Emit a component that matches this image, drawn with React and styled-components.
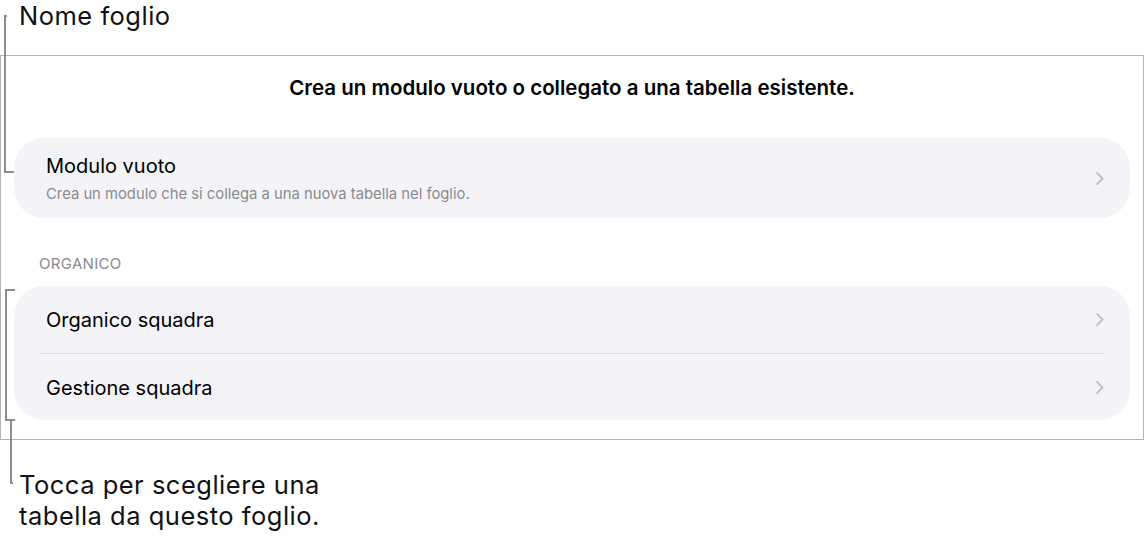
import React from 'react';
import styled, { createGlobalStyle } from 'styled-components';

const GlobalStyle = createGlobalStyle`
    body {
        margin: 0;
        background: #ffffff;
        font-family: Inter, "Liberation Sans", sans-serif;
        color: #000000;
    }
`

const Chevron = () => (
    <ChevronIcon width="8" height="13" viewBox="0 0 8 13">
        <polyline points="1.2,1 6.5,6.5 1.2,12" fill="none" stroke="#c3c3c7" strokeWidth="2" strokeLinecap="round" strokeLinejoin="round" />
    </ChevronIcon>
)

const Leaders = () => (
    <LeaderSvg width="1144" height="537" viewBox="0 0 1144 537">
        <g fill="none" stroke="#8e8e8e" strokeWidth="2">
            <path d="M7 16 H5 V172 H14" />
            <path d="M15 290 H6 V420 H15" />
            <path d="M11 420 V483 H13" />
        </g>
    </LeaderSvg>
)

const App = () => {
    return (
        <Page>
            <GlobalStyle />
            <Callout>Nome foglio</Callout>
            <Frame>
                <Title>Crea un modulo vuoto o collegato a una tabella esistente.</Title>
                <Group>
                    <Row tall>
                        <RowText>
                            <RowLabel>Modulo vuoto</RowLabel>
                            <RowDetail>Crea un modulo che si collega a una nuova tabella nel foglio.</RowDetail>
                        </RowText>
                        <Chevron />
                    </Row>
                </Group>
                <SectionLabel>ORGANICO</SectionLabel>
                <Group>
                    <Row>
                        <RowLabel>Organico squadra</RowLabel>
                        <Chevron />
                    </Row>
                    <Row divider>
                        <RowLabel>Gestione squadra</RowLabel>
                        <Chevron />
                    </Row>
                </Group>
            </Frame>
            <Callout bottom>Tocca per scegliere una<br />tabella da questo foglio.</Callout>
            <Leaders />
        </Page>
    )
}

export default App;

const Page = styled.div`
    position: relative;
    width: 1144px;
    height: 537px;
    overflow: hidden;
`

const Callout = styled.div`
    padding-left: 19px;
    font-family: Inter, "Liberation Sans", sans-serif;
    font-size: 25.5px;
    letter-spacing: 0.5px;
    line-height: ${props => props.bottom ? '31px' : '30px'};
    color: #111111;
    height: ${props => props.bottom ? 'auto' : '55px'};
    margin-top: ${props => props.bottom ? '29px' : '0'};
    padding-top: ${props => props.bottom ? '0' : '1px'};
    box-sizing: border-box;
`

const Frame = styled.div`
    width: 1144px;
    height: 385px;
    box-sizing: border-box;
    border: 1px solid #b4b4b4;
    padding: 21px 13px 0 13px;
    display: flex;
    flex-direction: column;
`

const Title = styled.div`
    text-align: center;
    font-size: 20.5px;
    font-weight: 600;
    line-height: 22px;
    margin-bottom: 39px;
`

const Group = styled.div`
    background: #f4f4f8;
    border-radius: 30px;
    display: flex;
    flex-direction: column;
`

const Row = styled.div`
    display: flex;
    align-items: center;
    justify-content: space-between;
    height: ${props => props.tall ? '80px' : '67px'};
    margin: 0 25px 0 25px;
    padding: 0 1px 0 7px;
    border-top: ${props => props.divider ? '1px solid #e0e0e4' : 'none'};
    box-sizing: border-box;
`

const RowText = styled.div`
    display: flex;
    flex-direction: column;
    gap: 7px;
`

const RowLabel = styled.div`
    font-size: 20px;
    line-height: 24px;
    margin-top: 1px;
`

const RowDetail = styled.div`
    font-size: 14.8px;
    line-height: 18px;
    color: #8a8a8e;
`

const SectionLabel = styled.div`
    font-size: 15px;
    line-height: 18px;
    letter-spacing: 0.3px;
    color: #8a8a8e;
    padding-left: 25px;
    margin: 37px 0 13px 0;
`

const ChevronIcon = styled.svg`
    flex-shrink: 0;
    display: block;
`

const LeaderSvg = styled.svg`
    position: absolute;
    top: 0;
    left: 0;
    pointer-events: none;
`
